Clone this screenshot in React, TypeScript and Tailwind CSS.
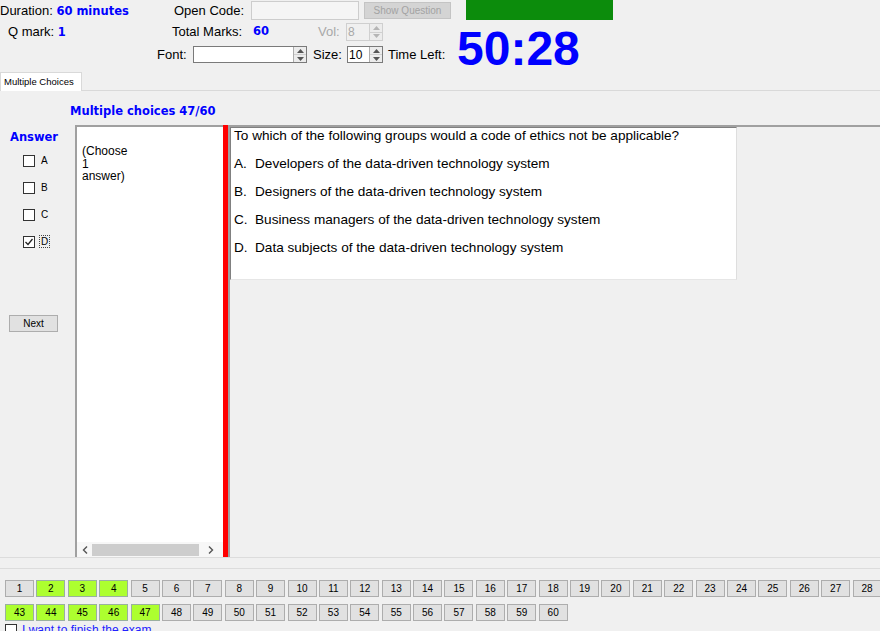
import React from "react";

const BOLD = { fontFamily: '"DejaVu Sans", Verdana, sans-serif' };

function Arrows({ disabled }: { disabled?: boolean }) {
  const c = disabled ? "#b5b5b5" : "#555";
  return (
    <div className={`flex w-[13px] flex-col border-l ${disabled ? "border-[#d0d0d0]" : "border-[#adadad]"} bg-[#ececec]`}>
      <div className="flex flex-1 items-center justify-center border-b border-[#d0d0d0]">
        <svg width="7" height="4" viewBox="0 0 7 4"><path d="M0 4 L3.5 0 L7 4 Z" fill={c} /></svg>
      </div>
      <div className="flex flex-1 items-center justify-center">
        <svg width="7" height="4" viewBox="0 0 7 4"><path d="M0 0 L3.5 4 L7 0 Z" fill={c} /></svg>
      </div>
    </div>
  );
}

function Spinner({ value, disabled, w, h }: { value: string; disabled?: boolean; w: string; h: string }) {
  return (
    <div className={`flex ${w} ${h} border ${disabled ? "border-[#cfcfcf] bg-[#f0f0f0] text-[#a8a8a8]" : "border-[#7a7a7a] bg-white text-black"}`}>
      <div className="flex flex-1 items-center pl-[1px] text-[12px] leading-none">{value}</div>
      <Arrows disabled={disabled} />
    </div>
  );
}

function Check({ label, checked }: { label: string; checked?: boolean }) {
  return (
    <div className="flex h-[27px] items-center pl-[23px]">
      <div className="flex h-[12px] w-[12px] items-center justify-center border border-[#333] bg-white">
        {checked && (
          <svg width="10" height="10" viewBox="0 0 10 10">
            <path d="M1.5 5 L4 7.5 L8.5 2" fill="none" stroke="#222" strokeWidth="1.3" />
          </svg>
        )}
      </div>
      <span className={`ml-[4px] text-[10px] leading-[11px] ${checked ? "border border-dotted border-[#444] px-[1px]" : "px-[2px]"}`}>{label}</span>
    </div>
  );
}

function NumBtn({ n, green }: { n: number; green?: boolean }) {
  return (
    <div
      className={`flex h-[17px] w-[29px] shrink-0 items-center justify-center border text-[10px] leading-none text-black ${
        green ? "border-[#9ab0a0] bg-[#adff2f]" : "border-[#adadad] bg-[#e1e1e1]"
      }`}
    >
      {n}
    </div>
  );
}

export default function App() {
  const row1 = Array.from({ length: 42 }, (_, i) => i + 1);
  const row2 = Array.from({ length: 18 }, (_, i) => i + 43);
  const greens = new Set([2, 3, 4, 43, 44, 45, 46, 47]);

  return (
    <div
      className="h-[631px] w-[880px] overflow-hidden bg-[#f0f0f0] text-[13px] text-black"
      style={{ fontFamily: '"Liberation Sans", Arial, sans-serif' }}
    >
      {/* Header */}
      <div className="flex h-[72px]">
        <div className="flex w-[457px] shrink-0 flex-col">
          <div className="flex h-[21px] shrink-0 items-center">
            <div className="w-[174px] whitespace-nowrap">
              Duration:{" "}
              <span className="text-[11.5px] font-bold text-[#0000ff]" style={BOLD}>
                60 minutes
              </span>
            </div>
            <span className="w-[77px]">Open Code:</span>
            <div className="h-[19px] w-[108px] border border-[#cdcdcd] bg-[#f5f5f5]" />
            <div className="ml-[5px] flex h-[17px] w-[87px] items-center justify-center border border-[#c4c4c4] bg-[#d4d4d4] text-[10px] text-[#a3a3a3]">
              Show Question
            </div>
          </div>
          <div className="flex h-[22px] shrink-0 items-center">
            <div className="w-[172px] whitespace-nowrap pl-[8px]">
              Q mark:{" "}
              <span className="text-[11.5px] font-bold text-[#0000ff]" style={BOLD}>
                1
              </span>
            </div>
            <span className="w-[81px]">Total Marks:</span>
            <span className="w-[65px] text-[11.5px] font-bold text-[#0000ff]" style={BOLD}>
              60
            </span>
            <span className="w-[28px] text-[#a8a8a8]">Vol:</span>
            <Spinner value="8" disabled w="w-[37px]" h="h-[18px]" />
          </div>
          <div className="flex h-[23px] shrink-0 items-center pl-[157px]">
            <span className="w-[36px]">Font:</span>
            <div className="flex h-[17px] w-[114px] border border-[#7a7a7a] bg-white">
              <div className="flex-1" />
              <Arrows />
            </div>
            <span className="ml-[6px] w-[34px]">Size:</span>
            <Spinner value="10" w="w-[36px]" h="h-[17px]" />
            <span className="ml-[5px] whitespace-nowrap">Time Left:</span>
          </div>
        </div>
        <div className="flex flex-col">
          <div className="ml-[9px] h-[20px] w-[147px] shrink-0 bg-[#0c8c0c]" />
          <div className="mt-[7px] shrink-0 text-[48px] font-bold leading-[44px] text-[#0000ff]">50:28</div>
        </div>
      </div>

      {/* Tab strip */}
      <div className="flex h-[19px]">
        <div className="flex w-[82px] items-center border-l border-r border-t border-[#d9d9d9] bg-white pl-[3px] text-[9.5px]">
          Multiple Choices
        </div>
        <div className="flex-1 border-b border-[#d9d9d9]" />
      </div>

      {/* Main panel */}
      <div className="flex h-[467px] flex-col border-b border-[#dcdcdc]">
        <div className="h-[34px] pl-[70px] pt-[13px]">
          <div className="text-[11.5px] font-bold leading-[14px] text-[#0000ff]" style={BOLD}>
            Multiple choices 47/60
          </div>
        </div>
        <div className="flex flex-1">
          {/* Answer column */}
          <div className="flex w-[75px] flex-col">
            <div className="pl-[10px] pt-[5px] text-[11.5px] font-bold leading-[14px] text-[#0000ff]" style={BOLD}>
              Answer
            </div>
            <div className="mt-[3px]">
              <Check label="A" />
              <Check label="B" />
              <Check label="C" />
              <Check label="D" checked />
            </div>
            <div className="ml-[9px] mt-[60px] flex h-[17px] w-[49px] items-center justify-center border border-[#adadad] bg-[#e1e1e1] text-[10px]">
              Next
            </div>
          </div>

          {/* Instruction box */}
          <div className="flex w-[148px] flex-col border-l-2 border-t-2 border-[#a0a0a0] bg-white">
            <div className="flex-1 pl-[5px] pt-[18px] text-[12px] leading-[12.5px]">
              (Choose
              <br />1
              <br />
              answer)
            </div>
            <div className="flex h-[15px] items-center bg-[#f7f7f7]">
              <div className="flex w-[15px] items-center justify-center">
                <svg width="6" height="8" viewBox="0 0 6 8"><path d="M5 0.5 L1.5 4 L5 7.5" fill="none" stroke="#555" strokeWidth="1.4" /></svg>
              </div>
              <div className="h-[12px] w-[107px] bg-[#cdcdcd]" />
              <div className="flex flex-1 items-center justify-center">
                <svg width="6" height="8" viewBox="0 0 6 8"><path d="M1 0.5 L4.5 4 L1 7.5" fill="none" stroke="#555" strokeWidth="1.4" /></svg>
              </div>
            </div>
          </div>

          {/* Red divider */}
          <div className="w-[5px] bg-[#ff0000]" />

          {/* Question pane */}
          <div className="flex-1 border-l-2 border-t-2 border-[#a0a0a0] bg-[#f0f0f0]">
            <div className="h-[153px] w-[507px] border-b border-l border-r border-t border-b-[#e6e6e6] border-l-[#808080] border-r-[#dedede] border-t-[#808080] bg-white pl-[3px] text-[13.6px] leading-[15px]">
              <div className="whitespace-nowrap">To which of the following groups would a code of ethics not be applicable?</div>
              {[
                ["A.", "Developers of the data-driven technology system"],
                ["B.", "Designers of the data-driven technology system"],
                ["C.", "Business managers of the data-driven technology system"],
                ["D.", "Data subjects of the data-driven technology system"],
              ].map(([k, t]) => (
                <div key={k} className="mt-[13px] flex whitespace-nowrap">
                  <span className="w-[21px]">{k}</span>
                  <span>{t}</span>
                </div>
              ))}
            </div>
          </div>
        </div>
      </div>

      {/* Bottom */}
      <div className="h-[10px]" />
      <div className="h-[1px] bg-[#dcdcdc]" />
      <div className="h-[11px]" />
      <div className="flex gap-[2.4px] pl-[5px]">
        {row1.map((n) => (
          <NumBtn key={n} n={n} green={greens.has(n)} />
        ))}
      </div>
      <div className="mt-[7px] flex gap-[2.4px] pl-[5px]">
        {row2.map((n) => (
          <NumBtn key={n} n={n} green={greens.has(n)} />
        ))}
      </div>
      <div className="mt-[2px] flex items-start pl-[5px]">
        <div className="mt-[1px] h-[12px] w-[12px] border border-[#333] bg-white" />
        <span className="ml-[5px] text-[12px] leading-[14px] text-[#2222ff]">I want to finish the exam</span>
      </div>
    </div>
  );
}
